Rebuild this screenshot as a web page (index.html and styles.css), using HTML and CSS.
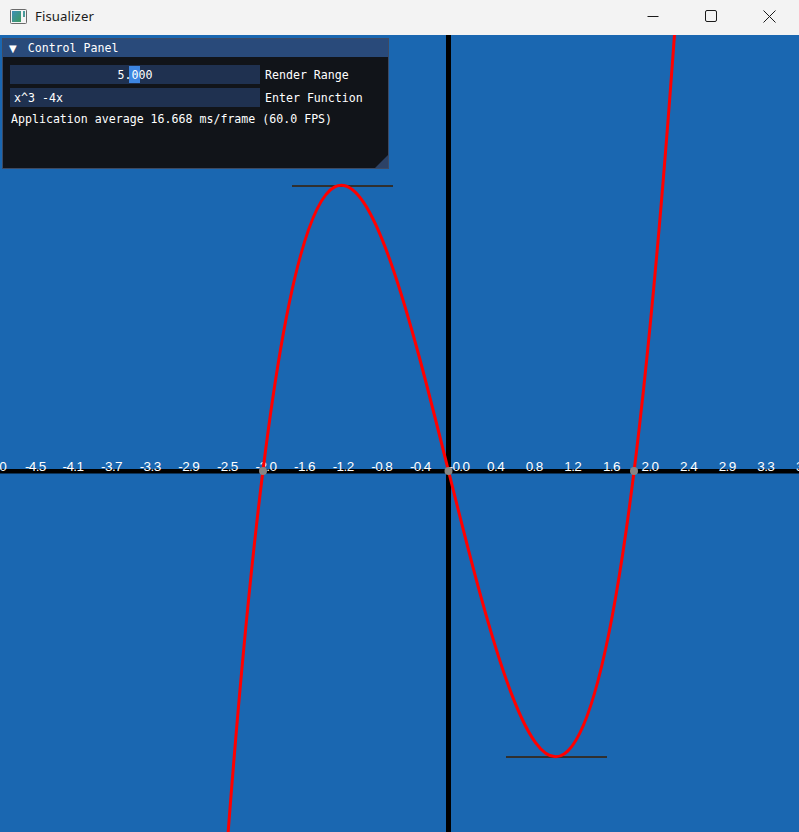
FILE: index.html
```html
<!DOCTYPE html>
<html lang="en">
<head>
<meta charset="utf-8">
<title>Fisualizer</title>
<link rel="stylesheet" href="styles.css">
</head>
<body>
<div class="window">
  <header class="titlebar">
    <div class="app">
      <svg class="app-icon" width="17" height="15" viewBox="0 0 17 15">
        <defs>
          <linearGradient id="ig" x1="0" y1="0" x2="1" y2="1">
            <stop offset="0" stop-color="#3f8fb8"/>
            <stop offset="1" stop-color="#3c9a5e"/>
          </linearGradient>
        </defs>
        <rect x="0.5" y="0.5" width="16" height="14" rx="1" fill="#f4f4f4" stroke="#6a6a6a"/>
        <rect x="2" y="2" width="9" height="11" fill="url(#ig)"/>
        <rect x="13" y="2" width="2" height="6" fill="#4a9a9a"/>
      </svg>
      <span class="app-title">Fisualizer</span>
    </div>
    <div class="controls">
      <div class="ctl"><svg width="12" height="12" viewBox="0 0 12 12"><path d="M0.5 6.5h11" stroke="#1a1a1a" stroke-width="1"/></svg></div>
      <div class="ctl"><svg width="12" height="12" viewBox="0 0 12 12"><rect x="0.5" y="0.5" width="11" height="11" rx="1.5" fill="none" stroke="#1a1a1a" stroke-width="1"/></svg></div>
      <div class="ctl"><svg width="13" height="13" viewBox="0 0 13 13"><path d="M0.5 0.5L12.5 12.5M12.5 0.5L0.5 12.5" stroke="#1a1a1a" stroke-width="1"/></svg></div>
    </div>
  </header>
  <main class="canvas">
    <svg class="plot" width="799" height="797" viewBox="0 0 799 797">
      <rect class="axis" x="446" y="0" width="5" height="797"/>
      <rect class="axis" x="0" y="434" width="799" height="4.5"/>
      <g class="labels">
        <text x="-14.7" y="436">-5.0</text>
        <text x="24.9" y="436">-4.5</text>
        <text x="62.5" y="436">-4.1</text>
        <text x="101.1" y="436">-3.7</text>
        <text x="139.7" y="436">-3.3</text>
        <text x="178.3" y="436">-2.9</text>
        <text x="216.9" y="436">-2.5</text>
        <text x="255.5" y="436">-2.0</text>
        <text x="294.1" y="436">-1.6</text>
        <text x="332.7" y="436">-1.2</text>
        <text x="371.3" y="436">-0.8</text>
        <text x="409.9" y="436">-0.4</text>
        <text x="448.5" y="436">-0.0</text>
        <text x="487.1" y="436">0.4</text>
        <text x="525.7" y="436">0.8</text>
        <text x="564.3" y="436">1.2</text>
        <text x="602.9" y="436">1.6</text>
        <text x="641.5" y="436">2.0</text>
        <text x="680.1" y="436">2.4</text>
        <text x="718.7" y="436">2.9</text>
        <text x="757.3" y="436">3.3</text>
        <text x="795.9" y="436">3.7</text>
      </g>
      <path class="tangent" d="M292 151H393"/>
      <path class="tangent" d="M506 722H607"/>
      <path class="curve" d="M221.14 891.28C374.26 -1253.5 527.38 2172.5 680.5 -86"/>
      <circle class="root" cx="263" cy="436" r="4"/>
      <circle class="root" cx="448.5" cy="436" r="4"/>
      <circle class="root" cx="634" cy="436" r="4"/>
    </svg>

    <section class="panel">
      <div class="panel-title">
        <span class="caret">▼</span>
        <span>Control Panel</span>
      </div>
      <div class="panel-body">
        <div class="row">
          <div class="frame slider">
            <span class="grab"></span>
            <span class="slider-value">5.000</span>
          </div>
          <span class="label">Render Range</span>
        </div>
        <div class="row">
          <div class="frame input">x^3 -4x</div>
          <span class="label">Enter Function</span>
        </div>
        <div class="stats">Application average 16.668 ms/frame (60.0 FPS)</div>
      </div>
      <span class="grip"></span>
    </section>
  </main>
</div>
</body>
</html>
```

FILE: styles.css
```css
html, body {
  margin: 0;
  padding: 0;
}
body {
  width: 799px;
  height: 832px;
  overflow: hidden;
  background: #1a67b1;
}
.window {
  display: flex;
  flex-direction: column;
  width: 799px;
  height: 832px;
}
.titlebar {
  height: 35px;
  flex: 0 0 35px;
  background: #f3f3f3;
  display: flex;
  justify-content: space-between;
  align-items: flex-start;
}
.app {
  display: flex;
  align-items: center;
  height: 32px;
  padding-left: 10px;
}
.app-icon {
  display: block;
  margin-right: 8px;
}
.app-title {
  font-family: "Noto Sans", "Open Sans", sans-serif;
  font-size: 13.2px;
  color: #1b1b1b;
  letter-spacing: 0.1px;
}
.controls {
  display: flex;
  height: 32px;
}
.ctl {
  width: 58.5px;
  height: 32px;
  display: flex;
  align-items: center;
  justify-content: center;
}
.ctl svg {
  display: block;
}
.canvas {
  position: relative;
  flex: 1 1 auto;
  background: #1a67b1;
  overflow: hidden;
}
.plot {
  display: block;
}
.axis {
  fill: #000;
}
.labels text {
  font-family: "Liberation Sans", Arial, sans-serif;
  font-size: 13.5px;
  fill: #ffffff;
  letter-spacing: -0.6px;
}
.tangent {
  stroke: #303030;
  stroke-width: 2;
  fill: none;
}
.curve {
  stroke: #ff0000;
  stroke-width: 3;
  fill: none;
}
.root {
  fill: #858585;
}
.panel {
  position: absolute;
  left: 2px;
  top: 3px;
  width: 385px;
  height: 129px;
  background: #111419;
  border: 1px solid #3d4a63;
  font-family: "DejaVu Sans Mono", "Liberation Mono", monospace;
  font-size: 11.6px;
  color: #ffffff;
}
.panel-title {
  height: 18px;
  background: #294a7a;
  display: flex;
  align-items: center;
  padding-left: 6px;
  gap: 11px;
}
.caret {
  font-size: 10px;
  font-family: "DejaVu Sans", sans-serif;
}
.panel-body {
  padding: 8px 7px 0 7px;
  display: flex;
  flex-direction: column;
  gap: 4px;
}
.row {
  display: flex;
  align-items: center;
  gap: 5px;
}
.frame {
  width: 250px;
  height: 19px;
  background: #1f3150;
  box-sizing: border-box;
  display: flex;
  align-items: center;
}
.slider {
  position: relative;
  justify-content: center;
}
.grab {
  position: absolute;
  left: 119px;
  top: 1px;
  width: 11px;
  height: 17px;
  background: #3d85e0;
}
.slider-value {
  position: relative;
}
.input {
  padding-left: 4px;
}
.stats {
  margin-top: 1px;
  padding-left: 1px;
}
.grip {
  position: absolute;
  right: 0;
  bottom: 0;
  width: 0;
  height: 0;
  border-style: solid;
  border-width: 0 0 13px 13px;
  border-color: transparent transparent #2c4266 transparent;
}
```
